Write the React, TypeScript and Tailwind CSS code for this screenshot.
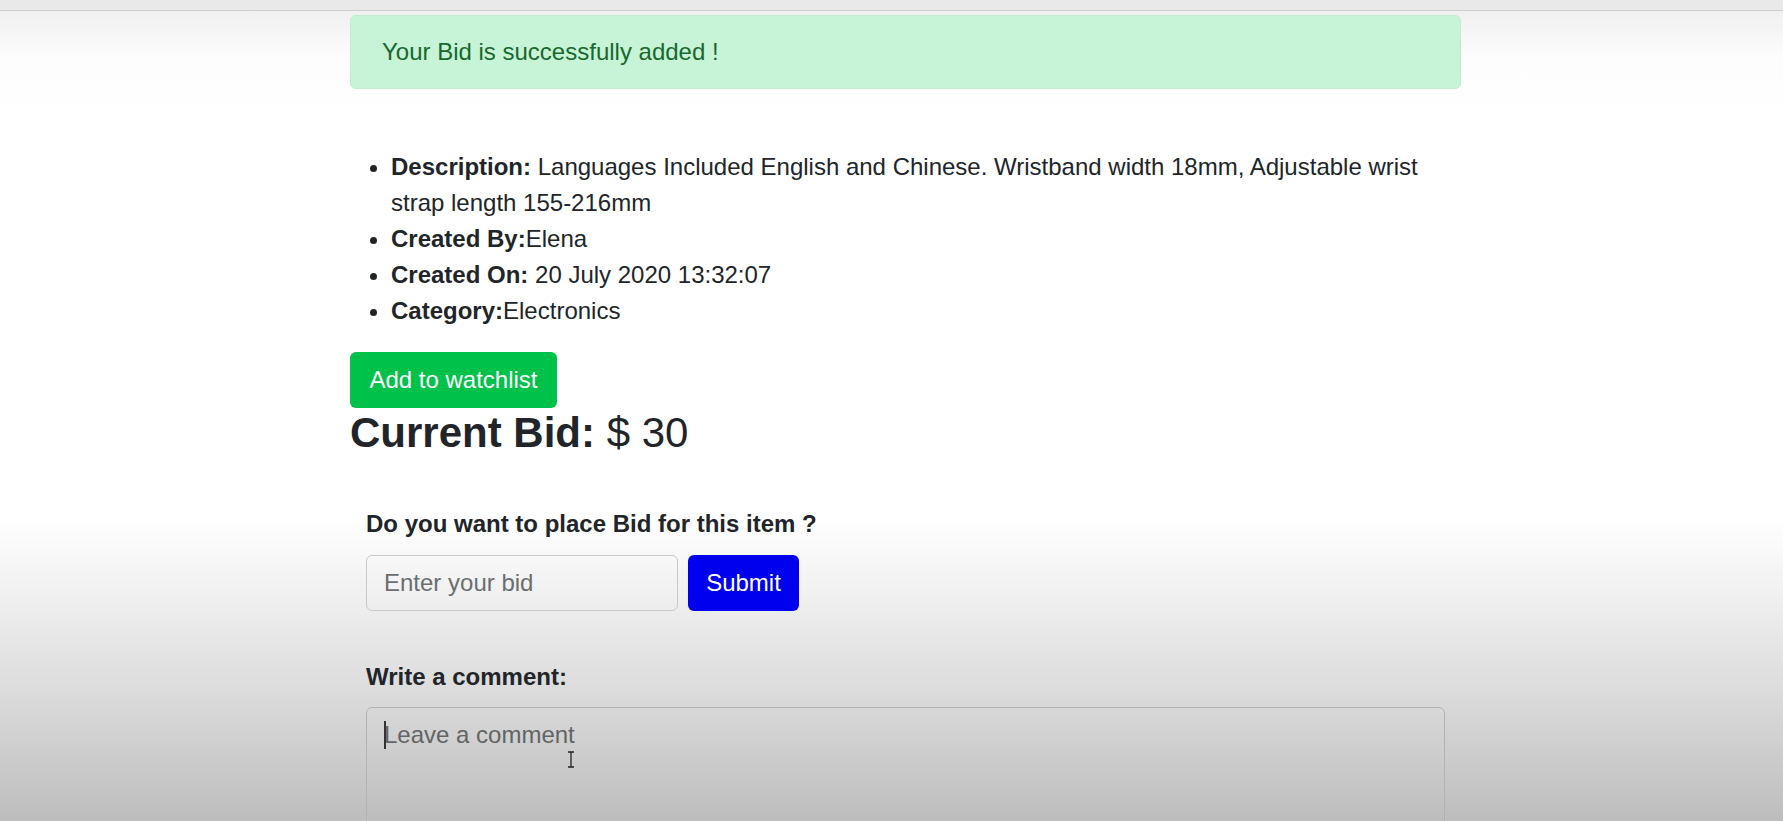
export default function App() {
  return (
    <div className="relative h-[821px] overflow-hidden bg-[linear-gradient(to_bottom,#ededed_0px,#fdfdfd_60px,#ffffff_120px,#ffffff_520px,#f1f1f1_590px,#dcdcdc_690px,#bdbdbd_821px)] font-['Liberation_Sans',Arial,sans-serif] text-[24px] leading-[36px] text-[#212529]">
      {/* browser strip */}
      <div className="h-[11px] bg-[#e9e9e9] border-b border-[#cfcfcf]" />

      <div className="ml-[350px] w-[1111px]">
        {/* alert */}
        <div className="mt-[4px] h-[74px] px-[31px] py-[18px] rounded-[6px] border border-[#c1ecd0] bg-[#c7f3d7] text-[#17692e]">
          Your Bid is successfully added !
        </div>

        {/* details */}
        <ul className="mt-[60px] mb-[23px] list-disc pl-[41px]">
          <li>
            <strong>Description:</strong> Languages Included English and Chinese. Wristband width 18mm, Adjustable wrist
            strap length 155-216mm
          </li>
          <li>
            <strong>Created By:</strong>Elena
          </li>
          <li>
            <strong>Created On:</strong> 20 July 2020 13:32:07
          </li>
          <li>
            <strong>Category:</strong>Electronics
          </li>
        </ul>

        <button className="h-[56px] w-[207px] rounded-[6px] bg-[#00c14a] text-white text-[24px] leading-[36px]">
          Add to watchlist
        </button>

        <h3 className="text-[42px] leading-[50px] font-normal">
          <strong>Current Bid:</strong> $ 30
        </h3>

        {/* bid form */}
        <div className="mx-[16px] mt-[48px]">
          <label className="block font-bold mb-[13px]">Do you want to place Bid for this item ?</label>
          <div className="flex gap-[10px]">
            <input
              type="text"
              placeholder="Enter your bid"
              className="w-[312px] h-[56px] rounded-[6px] border border-[#c9c9c9] bg-transparent px-[17px] text-[24px] outline-none placeholder:text-[#6b6d70]"
            />
            <button className="w-[111px] h-[56px] rounded-[6px] bg-[#0000ee] text-white text-[24px]">Submit</button>
          </div>

          <label className="block font-bold mt-[48px] mb-[12px]">Write a comment:</label>
          <div className="relative">
            <textarea
              placeholder="Leave a comment"
              className="block w-[1079px] h-[180px] resize-none rounded-[6px] border border-[#b3b3b3] bg-transparent px-[17px] py-[9px] text-[24px] leading-[36px] outline-none placeholder:text-[#626466]"
            />
            <span className="absolute left-[18px] top-[14px] h-[28px] w-[2px] bg-[#333]" />
            <svg className="absolute left-[201px] top-[44px]" width="8" height="17" viewBox="0 0 8 17">
              <path d="M1 1h6M4 1v15M1 16h6" stroke="#222" strokeWidth="1.3" fill="none" />
            </svg>
          </div>
        </div>
      </div>
    </div>
  );
}
